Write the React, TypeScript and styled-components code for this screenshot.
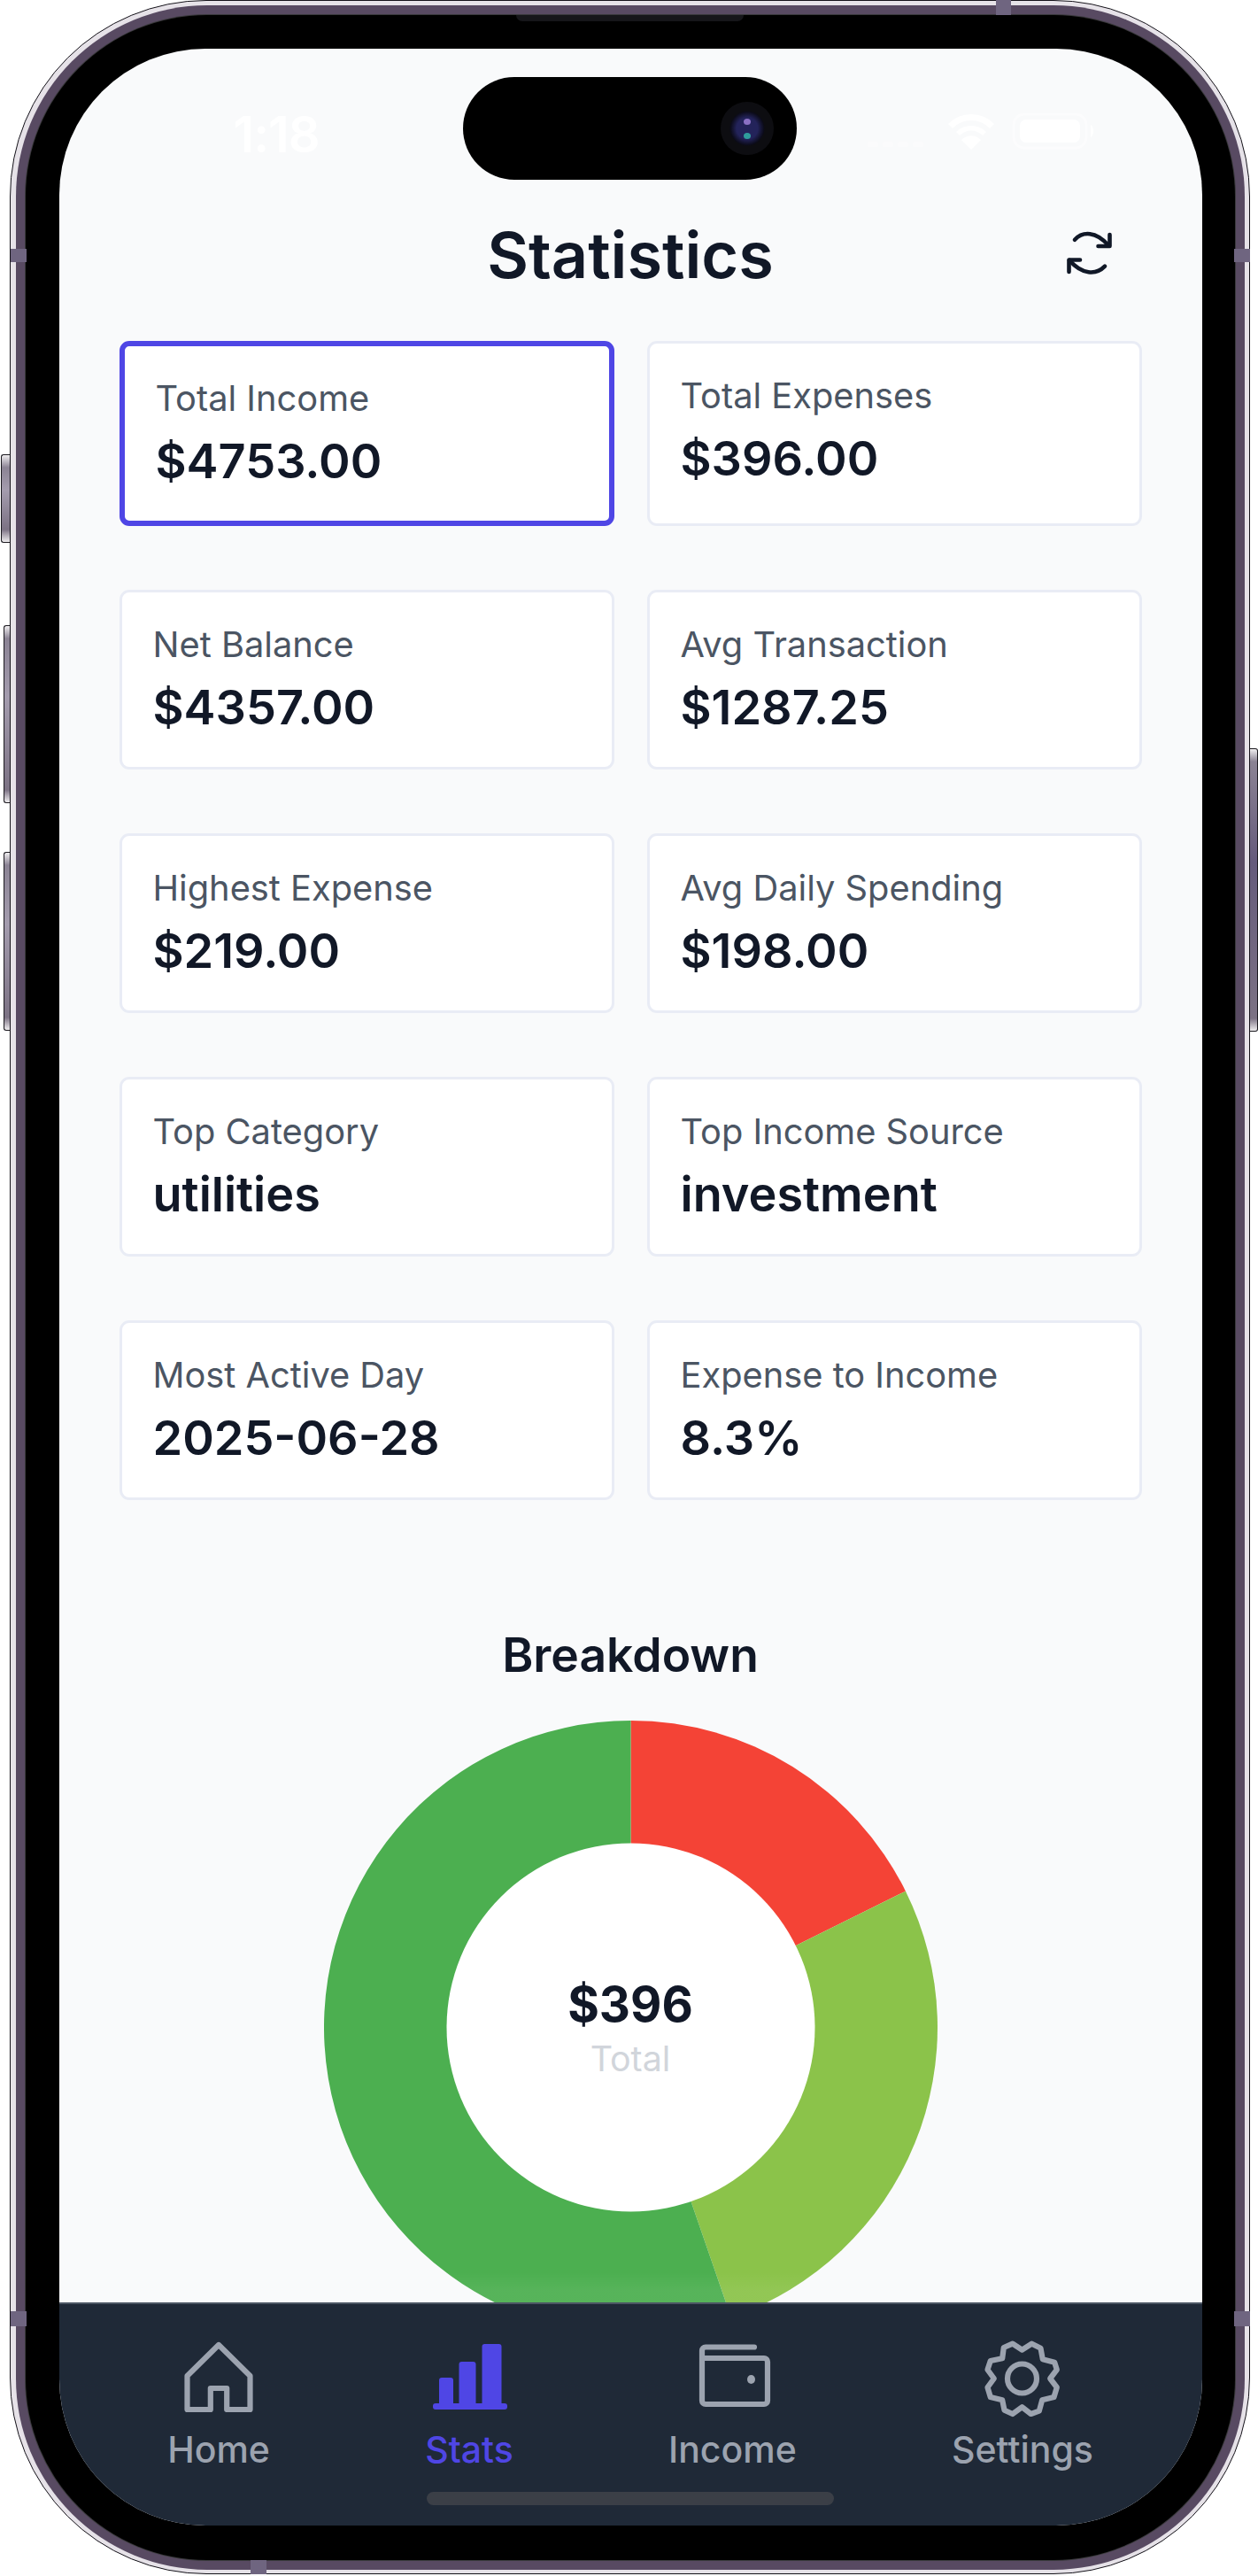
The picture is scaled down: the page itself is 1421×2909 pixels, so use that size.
import React from "react";
import styled, { createGlobalStyle } from "styled-components";

const Global = createGlobalStyle`
  html, body { margin: 0; padding: 0; background: #fff; }
  body { font-family: Inter, "Noto Sans", sans-serif; -webkit-font-smoothing: antialiased; }
  * { box-sizing: border-box; }
`;

const Page = styled.div`
  width: 1421px;
  height: 2909px;
  padding: 0 9px 2px 11px;
  overflow: hidden;
`;

const Device = styled.div`
  position: relative;
  width: 100%;
  height: 100%;
`;

const Shell = styled.div`
  width: 100%;
  height: 100%;
  border: 1.5px solid #15131a;
  border-radius: 222px;
  background: #e6e2e8;
  padding: 4.5px 5.5px;
`;

const Band = styled.div`
  width: 100%;
  height: 100%;
  border-radius: 216px;
  background: #584a62;
  padding: 11px;
`;

const Bezel = styled.div`
  width: 100%;
  height: 100%;
  border-radius: 205px;
  background: #000;
  box-shadow: 0 0 0 1px #3a3a3c;
  padding: 38px 37px 39px 38px;
`;

const Screen = styled.div`
  position: relative;
  display: flex;
  flex-direction: column;
  width: 100%;
  height: 100%;
  overflow: hidden;
  background: #f9fafb;
  border-radius: 165px;
`;

const SideButton = styled.div<{ $side: "left" | "right"; $top: number; $height: number; $width: number }>`
  position: absolute;
  top: ${(p) => p.$top}px;
  height: ${(p) => p.$height}px;
  width: ${(p) => p.$width}px;
  ${(p) => (p.$side === "left" ? `left: -${p.$width}px;` : `right: -${p.$width}px;`)}
  ${(p) => (p.$side === "left" ? "border-radius: 3px 0 0 3px;" : "border-radius: 0 3px 3px 0;")}
  border: 1px solid #1c1a20;
  ${(p) => (p.$side === "left" ? "border-right: 0;" : "border-left: 0;")}
  background: linear-gradient(180deg, #f0eef0 0, #8b8394 14px, ${(p) => (p.$side === "left" ? "#a49cae" : "#655a7c")} 40%, #7c7284 calc(100% - 14px), #efedef 100%);
`;

const Antenna = styled.div<{ $x: number; $y: number; $w: number; $h: number }>`
  position: absolute;
  left: ${(p) => p.$x}px;
  top: ${(p) => p.$y}px;
  width: ${(p) => p.$w}px;
  height: ${(p) => p.$h}px;
  background: #6f6580;
`;

const Speaker = styled.div`
  position: absolute;
  left: 572px;
  top: 17px;
  width: 257px;
  height: 7px;
  border-radius: 0 0 8px 8px;
  background: #16161a;
`;

const Island = styled.div`
  position: absolute;
  left: 456px;
  top: 32px;
  width: 377px;
  height: 116px;
  border-radius: 58px;
  background: #000;
  z-index: 3;
`;

const Camera = styled.div`
  position: absolute;
  right: 26px;
  top: 28px;
  width: 60px;
  height: 60px;
  border-radius: 50%;
  background: radial-gradient(circle, #23235a 0 12px, #0b0b18 19px, #0d0d11 20px 30px);
  &::before {
    content: "";
    position: absolute;
    left: 26px;
    top: 19px;
    width: 8px;
    height: 7px;
    border-radius: 50%;
    background: #8a70c4;
  }
  &::after {
    content: "";
    position: absolute;
    left: 26px;
    top: 35px;
    width: 8px;
    height: 7px;
    border-radius: 50%;
    background: #2f9c9c;
  }
`;

const Time = styled.div`
  position: absolute;
  left: 197px;
  top: 67px;
  font-size: 56px;
  line-height: 60px;
  font-weight: 600;
  color: #ffffff;
  letter-spacing: -1px;
`;

const StatusIcons = styled.svg`
  position: absolute;
  left: 905px;
  top: 70px;
  width: 300px;
  height: 50px;
`;

const Content = styled.main`
  flex: 1;
  min-height: 0;
  position: relative;
  overflow: hidden;
  padding: 0 68px 0 68px;
`;

const Header = styled.header`
  display: grid;
  grid-template-columns: 1fr auto 1fr;
  align-items: center;
  padding-top: 189px;
  margin-bottom: 53px;
`;

const Title = styled.h1`
  grid-column: 2;
  margin: 0;
  font-size: 72px;
  line-height: 88px;
  font-weight: 600;
  color: #111827;
`;

const RefreshButton = styled.button`
  grid-column: 3;
  justify-self: end;
  width: 80px;
  height: 80px;
  margin: 5px 20px 0 0;
  padding: 0;
  border: 0;
  background: none;
  color: #111827;
  display: flex;
`;

const Grid = styled.section`
  display: grid;
  grid-template-columns: 1fr 1fr;
  column-gap: 37px;
  row-gap: 72px;
`;

const Card = styled.div<{ $selected?: boolean }>`
  background: #fff;
  border-style: solid;
  border-width: ${(p) => (p.$selected ? "6px" : "3px")};
  border-color: ${(p) => (p.$selected ? "#4f46e5" : "#e9ecf5")};
  border-radius: 11px;
  padding: 35px 34px 35px 35px;
`;

const Label = styled.div`
  font-size: 39.8px;
  line-height: 48px;
  font-weight: 400;
  color: #4b5563;
`;

const Value = styled.div`
  margin-top: 15px;
  font-size: 54px;
  line-height: 64px;
  font-weight: 600;
  color: #111827;
`;

const Breakdown = styled.section`
  display: flex;
  flex-direction: column;
  align-items: center;
  margin-top: 140px;
`;

const BreakdownTitle = styled.h2`
  margin: 0 0 39px;
  font-size: 53.4px;
  line-height: 70px;
  font-weight: 600;
  color: #111827;
`;

const Chart = styled.div`
  position: relative;
  width: 693px;
  height: 693px;
  flex-shrink: 0;
`;

const ChartCenter = styled.div`
  position: absolute;
  inset: 0;
  display: flex;
  flex-direction: column;
  align-items: center;
  justify-content: center;
  gap: 4px;
  padding-top: 1px;
`;

const CenterValue = styled.div`
  font-size: 54.5px;
  line-height: 66px;
  font-weight: 700;
  color: #111827;
`;

const CenterLabel = styled.div`
  font-size: 39.4px;
  line-height: 50px;
  color: #d1d5db;
`;

const BottomFade = styled.div`
  position: absolute;
  left: 0;
  right: 0;
  bottom: 0;
  height: 34px;
  background: linear-gradient(180deg, rgba(255, 255, 255, 0), rgba(255, 255, 255, 0.06) 60%);
`;

const TabBar = styled.nav`
  position: relative;
  flex-shrink: 0;
  height: 252px;
  display: flex;
  justify-content: space-around;
  align-items: flex-start;
  padding: 41px 35px 0;
  background: #1f2937;
  border-top: 2px solid #4b5563;
`;

const Tab = styled.div<{ $active?: boolean }>`
  display: flex;
  flex-direction: column;
  align-items: center;
  gap: 15px;
  color: ${(p) => (p.$active ? "#4f46e5" : "#9ca3af")};
`;

const TabIcon = styled.svg`
  width: 84px;
  height: 84px;
  overflow: visible;
  fill: none;
  stroke: currentColor;
  stroke-width: 6.2;
  stroke-linejoin: round;
  stroke-linecap: round;
`;

const TabLabel = styled.span`
  font-size: 41px;
  line-height: 48px;
  font-weight: 500;
`;

const HomeIndicator = styled.div`
  position: absolute;
  left: 415px;
  bottom: 23px;
  width: 460px;
  height: 15px;
  border-radius: 8px;
  background: #3b3f47;
`;

const stats = [
  { label: "Total Income", value: "$4753.00", selected: true },
  { label: "Total Expenses", value: "$396.00" },
  { label: "Net Balance", value: "$4357.00" },
  { label: "Avg Transaction", value: "$1287.25" },
  { label: "Highest Expense", value: "$219.00" },
  { label: "Avg Daily Spending", value: "$198.00" },
  { label: "Top Category", value: "utilities" },
  { label: "Top Income Source", value: "investment" },
  { label: "Most Active Day", value: "2025-06-28" },
  { label: "Expense to Income", value: "8.3%" },
];

const slices = [
  { value: 70, color: "#f44336" },
  { value: 107, color: "#8bc34a" },
  { value: 219, color: "#4caf50" },
];

function arcPath(from: number, to: number, r: number, c: number) {
  const pt = (a: number) => {
    const t = ((a - 90) * Math.PI) / 180;
    return `${(c + r * Math.cos(t)).toFixed(2)} ${(c + r * Math.sin(t)).toFixed(2)}`;
  };
  return `M${c} ${c}L${pt(from)}A${r} ${r} 0 ${to - from > 180 ? 1 : 0} 1 ${pt(to)}Z`;
}

function Donut() {
  const total = slices.reduce((s, x) => s + x.value, 0);
  let angle = 0;
  return (
    <svg width="693" height="693" viewBox="0 0 693 693" aria-hidden="true">
      {slices.map((s) => {
        const from = angle;
        angle += (s.value / total) * 360;
        return <path key={s.color} d={arcPath(from, angle, 346.5, 346.5)} fill={s.color} />;
      })}
      <circle cx="346.5" cy="346.5" r="208" fill="#fff" />
    </svg>
  );
}

const gearPoints =
  "41.5,10.7 52.5,3.7 62.5,8.7 64.8,21.3 78.2,24.7 80.8,33 73.2,43 80.8,53 77.5,64 64.2,67.3 60.8,79.7 51.5,83 41.5,75.3 30.8,83 21.5,78.7 19.2,67.3 5.8,64 2.5,53 9.8,43 2.5,33 5.8,23 19.2,20.3 20.8,8 30.8,3.7";

export default function App() {
  return (
    <Page>
      <Global />
      <Device>
        <SideButton $side="left" $top={513} $height={100} $width={10} />
        <SideButton $side="left" $top={706} $height={201} $width={7} />
        <SideButton $side="left" $top={962} $height={202} $width={7} />
        <SideButton $side="right" $top={845} $height={320} $width={9} />
        <Shell>
          <Band>
            <Bezel>
              <Screen>
                <Time>1:18</Time>
                <Island>
                  <Camera />
                </Island>
                <StatusIcons viewBox="0 0 300 50" aria-hidden="true">
                  <g fill="#fff" opacity="0.35">
                    <rect x="8" y="35" width="12" height="6" rx="1.5" />
                    <rect x="25" y="35" width="12" height="6" rx="1.5" />
                    <rect x="42" y="35" width="12" height="6" rx="1.5" />
                    <rect x="59" y="35" width="12" height="6" rx="1.5" />
                  </g>
                  <g transform="translate(24 0)">
                    <path d="M101 44 L90 33 A15 15 0 0 1 112 33 Z" fill="#fff" />
                    <path d="M84 24 A24 24 0 0 1 118 24 L114 28 A18 18 0 0 0 88 28 Z" fill="#fff" />
                    <path d="M75 15 A36 36 0 0 1 127 15 L122 20 A29 29 0 0 0 80 20 Z" fill="#fff" />
                    <rect x="149" y="4" width="82" height="38" rx="12" fill="none" stroke="#fff" strokeOpacity="0.45" strokeWidth="3" />
                    <rect x="156" y="10" width="68" height="26" rx="7" fill="#fff" />
                    <path d="M236 16 C240 18 240 28 236 30 Z" fill="#fff" />
                  </g>
                </StatusIcons>
                <Content>
                  <Header>
                    <Title>Statistics</Title>
                    <RefreshButton aria-label="Refresh">
                      <svg width="80" height="80" viewBox="0 0 80 80" fill="none" stroke="currentColor" strokeWidth="4.6" strokeLinecap="round" strokeLinejoin="round">
                        <path d="M24 20.7C33 11 48 11 62 27" />
                        <path d="M63.5 15V28H50.5" />
                        <path d="M58 50.7C48 61 32 60 18 44" />
                        <path d="M30 43.5H17.5V57" />
                      </svg>
                    </RefreshButton>
                  </Header>
                  <Grid>
                    {stats.map((s) => (
                      <Card key={s.label} $selected={s.selected}>
                        <Label>{s.label}</Label>
                        <Value>{s.value}</Value>
                      </Card>
                    ))}
                  </Grid>
                  <Breakdown>
                    <BreakdownTitle>Breakdown</BreakdownTitle>
                    <Chart>
                      <Donut />
                      <ChartCenter>
                        <CenterValue>$396</CenterValue>
                        <CenterLabel>Total</CenterLabel>
                      </ChartCenter>
                    </Chart>
                  </Breakdown>
                  <BottomFade />
                </Content>
                <TabBar>
                  <Tab>
                    <TabIcon viewBox="0 0 84 84" aria-hidden="true">
                      <path d="M42 5L77.5 40V78H51.2V54H32.8V78H6.5V40Z" />
                    </TabIcon>
                    <TabLabel>Home</TabLabel>
                  </Tab>
                  <Tab $active>
                    <TabIcon viewBox="0 0 84 84" aria-hidden="true">
                      <g fill="currentColor" stroke="none">
                        <path d="M8 75V45a3 3 0 0 1 3-3H21a3 3 0 0 1 3 3V75Z" />
                        <path d="M30.5 75V27a3 3 0 0 1 3-3H46.5a3 3 0 0 1 3 3V75Z" />
                        <path d="M56.500 75V7a3 3 0 0 1 3-3H75.500a3 3 0 0 1 3 3V75Z" />
                        <rect x="1" y="71" width="84" height="7" rx="3" />
                      </g>
                    </TabIcon>
                    <TabLabel>Stats</TabLabel>
                  </Tab>
                  <Tab>
                    <TabIcon viewBox="0 0 84 84" aria-hidden="true">
                      <path d="M67 7.500H12a4 4 0 0 0-4 4V68a4 4 0 0 0 4 4H78a4 4 0 0 0 4-4V24a4 4 0 0 0-4-4H8" />
                      <ellipse cx="63.500" cy="44" rx="4.500" ry="5" fill="currentColor" stroke="none" />
                    </TabIcon>
                    <TabLabel>Income</TabLabel>
                  </Tab>
                  <Tab>
                    <TabIcon viewBox="0 0 84 84" aria-hidden="true">
                      <polygon points={gearPoints} />
                      <circle cx="41.500" cy="43" r="16.500" />
                    </TabIcon>
                    <TabLabel>Settings</TabLabel>
                  </Tab>
                  <HomeIndicator />
                </TabBar>
              </Screen>
            </Bezel>
          </Band>
        </Shell>
        <Speaker />
        <Antenna $x={1} $y={281} $w={18} $h={15} />
        <Antenna $x={1383} $y={281} $w={18} $h={15} />
        <Antenna $x={1114} $y={0} $w={17} $h={17} />
        <Antenna $x={272} $y={2891} $w={18} $h={16} />
        <Antenna $x={1} $y={2610} $w={18} $h={17} />
        <Antenna $x={1383} $y={2610} $w={18} $h={17} />
      </Device>
    </Page>
  );
}
